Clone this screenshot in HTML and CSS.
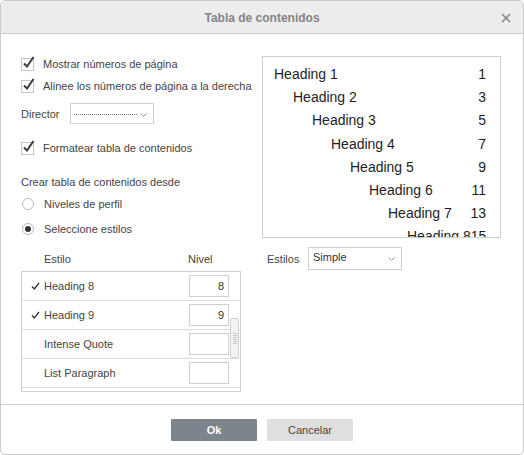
FILE: index.html
```html
<!DOCTYPE html>
<html>
<head>
<meta charset="utf-8">
<link rel="stylesheet" href="styles.css">
</head>
<body>
<div class="dialog">
  <div class="header">
    <span class="title">Tabla de contenidos</span>
    <svg class="close" width="10" height="10" viewBox="0 0 10 10"><path d="M1 1L9 9M9 1L1 9" stroke="#8a8a8a" stroke-width="1.6" fill="none"/></svg>
  </div>
  <div class="body">
    <div class="left">
      <div class="row">
        <span class="cb"><svg width="15" height="15" viewBox="0 0 15 15"><path d="M3 7.5L6 10.5L12.5 1" stroke="#3a3a3a" stroke-width="2" fill="none"/></svg></span>
        <span>Mostrar números de página</span>
      </div>
      <div class="row">
        <span class="cb"><svg width="15" height="15" viewBox="0 0 15 15"><path d="M3 7.5L6 10.5L12.5 1" stroke="#3a3a3a" stroke-width="2" fill="none"/></svg></span>
        <span>Alinee los números de página a la derecha</span>
      </div>
      <div class="row director">
        <span class="dlabel">Director</span>
        <div class="combo small">
          <span class="dots"></span>
          <svg class="chev" width="7" height="4" viewBox="0 0 7 4"><path d="M0.5 0.5L3.5 3.5L6.5 0.5" stroke="#9a9a9a" stroke-width="1" fill="none"/></svg>
        </div>
      </div>
      <div class="row fmt">
        <span class="cb"><svg width="15" height="15" viewBox="0 0 15 15"><path d="M3 7.5L6 10.5L12.5 1" stroke="#3a3a3a" stroke-width="2" fill="none"/></svg></span>
        <span>Formatear tabla de contenidos</span>
      </div>
      <div class="row crear">Crear tabla de contenidos desde</div>
      <div class="row">
        <span class="radio"></span>
        <span>Niveles de perfil</span>
      </div>
      <div class="row r2">
        <span class="radio on"></span>
        <span>Seleccione estilos</span>
      </div>
      <div class="row thead">
        <span class="th-estilo">Estilo</span>
        <span class="th-nivel">Nivel</span>
      </div>
      <div class="table">
        <div class="trow">
          <span class="tcheck"><svg width="9" height="8" viewBox="0 0 9 8"><path d="M1 4.5L3.3 7L8 1" stroke="#333" stroke-width="1.3" fill="none"/></svg></span>
          <span class="tname">Heading 8</span>
          <span class="lvl">8</span>
        </div>
        <div class="trow">
          <span class="tcheck"><svg width="9" height="8" viewBox="0 0 9 8"><path d="M1 4.5L3.3 7L8 1" stroke="#333" stroke-width="1.3" fill="none"/></svg></span>
          <span class="tname">Heading 9</span>
          <span class="lvl">9</span>
        </div>
        <div class="trow">
          <span class="tcheck"></span>
          <span class="tname">Intense Quote</span>
          <span class="lvl"></span>
        </div>
        <div class="trow">
          <span class="tcheck"></span>
          <span class="tname">List Paragraph</span>
          <span class="lvl"></span>
        </div>
        <div class="thumb"><span></span><span></span><span></span><span></span><span></span><span></span></div>
      </div>
    </div>
    <div class="right">
      <div class="preview">
        <div class="pl" style="padding-left:0px"><span>Heading 1</span><span>1</span></div>
        <div class="pl" style="padding-left:19px"><span>Heading 2</span><span>3</span></div>
        <div class="pl" style="padding-left:38px"><span>Heading 3</span><span>5</span></div>
        <div class="pl" style="padding-left:57px"><span>Heading 4</span><span>7</span></div>
        <div class="pl" style="padding-left:76px"><span>Heading 5</span><span>9</span></div>
        <div class="pl" style="padding-left:95px"><span>Heading 6</span><span>11</span></div>
        <div class="pl" style="padding-left:114px"><span>Heading 7</span><span>13</span></div>
        <div class="pl" style="padding-left:133px"><span>Heading 8</span><span>15</span></div>
      </div>
      <div class="estilos">
        <span class="elabel">Estilos</span>
        <div class="combo big">
          <span class="ctext">Simple</span>
          <svg class="chev" width="7" height="4" viewBox="0 0 7 4"><path d="M0.5 0.5L3.5 3.5L6.5 0.5" stroke="#9a9a9a" stroke-width="1" fill="none"/></svg>
        </div>
      </div>
    </div>
  </div>
  <div class="footer">
    <button class="btn ok">Ok</button>
    <button class="btn cancel">Cancelar</button>
  </div>
</div>
</body>
</html>
```

FILE: styles.css
```css
* { box-sizing: border-box; }
html, body { margin: 0; padding: 0; background: #fff; }
body {
  font-family: "Liberation Sans", Arial, sans-serif;
  font-size: 11px;
  color: #444;
}
.dialog {
  width: 524px;
  height: 455px;
  border: 1px solid #cbcbcb;
  border-radius: 5px;
  display: flex;
  flex-direction: column;
  overflow: hidden;
  background: #fff;
}
.header {
  height: 33px;
  flex: none;
  background: #ededed;
  border-bottom: 1px solid #cbcbcb;
  position: relative;
  display: flex;
  align-items: center;
  justify-content: center;
}
.title {
  font-size: 12px;
  font-weight: bold;
  color: #848484;
  margin-top: 2px;
}
.close {
  position: absolute;
  right: 12px;
  top: 12px;
}
.body {
  flex: 1;
  display: flex;
  padding-left: 20px;
}
.left {
  width: 219px;
  padding-top: 19px;
  display: flex;
  flex-direction: column;
}
.row {
  height: 22px;
  display: flex;
  align-items: center;
  white-space: nowrap;
}
.cb {
  width: 13px;
  height: 13px;
  border: 1px solid #c6c6c6;
  position: relative;
  margin-right: 9px;
  flex: none;
}
.cb svg {
  position: absolute;
  left: -1px;
  top: -3px;
}
.director {
  height: 21px;
  margin-top: 6px;
}
.dlabel { width: 49px; }
.combo {
  border: 1px solid #cfcfcf;
  display: flex;
  align-items: center;
  position: relative;
  background: #fff;
}
.combo.small { width: 84px; height: 21px; }
.combo.big { width: 94px; height: 23px; }
.dots {
  margin-left: 3px;
  width: 63px;
  border-bottom: 1px dotted #777;
  margin-top: 2px;
}
.chev {
  position: absolute;
  right: 6px;
  top: 9px;
}
.fmt { margin-top: 13px; }
.crear { margin-top: 12px; }
.radio {
  width: 12px;
  height: 12px;
  border: 1px solid #b8b8b8;
  border-radius: 50%;
  margin-right: 10px;
  margin-left: 1px;
  position: relative;
  flex: none;
}
.radio.on::after {
  content: "";
  position: absolute;
  left: 2px;
  top: 2px;
  width: 6px;
  height: 6px;
  border-radius: 50%;
  background: #333;
}
.r2 { margin-top: 3px; }
.thead { margin-top: 8px; }
.th-estilo { margin-left: 23px; width: 144px; }
.table {
  margin-top: 1px;
  width: 220px;
  height: 121px;
  border: 1px solid #cfcfcf;
  position: relative;
  overflow: hidden;
}
.trow {
  height: 29px;
  border-bottom: 1px solid #dcdcdc;
  display: flex;
  align-items: center;
}
.tcheck {
  width: 22px;
  padding-left: 9px;
  flex: none;
  display: flex;
  align-items: center;
}
.tname { flex: 1; }
.lvl {
  width: 40px;
  height: 22px;
  border: 1px solid #cfcfcf;
  margin-right: 11px;
  text-align: right;
  padding-right: 4px;
  line-height: 20px;
  color: #333;
  background: #fff;
}
.thumb {
  position: absolute;
  left: 208px;
  top: 46px;
  width: 9px;
  height: 40px;
  border: 1px solid #cfcfcf;
  border-radius: 2px;
  background: #f3f3f3;
  display: flex;
  flex-direction: column;
  align-items: center;
  justify-content: center;
  gap: 1px;
}
.thumb span {
  width: 4px;
  height: 1px;
  background: #c8c8c8;
}
.right {
  margin-left: 22px;
  padding-top: 22px;
  width: 239px;
  display: flex;
  flex-direction: column;
}
.preview {
  width: 239px;
  height: 182px;
  border: 1px solid #cfcfcf;
  overflow: hidden;
  padding: 6px 14px 0 11px;
  font-size: 14px;
  color: #1e1e1e;
}
.pl {
  height: 23.2px;
  line-height: 23px;
  display: flex;
  justify-content: space-between;
  white-space: nowrap;
}
.estilos {
  margin-top: 9px;
  display: flex;
  align-items: center;
}
.elabel { margin-left: 5px; width: 41px; }
.ctext { margin-left: 4px; margin-top: -3px; color: #333; }
.footer {
  height: 50px;
  flex: none;
  border-top: 1px solid #cbcbcb;
  display: flex;
  justify-content: center;
  gap: 10px;
  padding-top: 14px;
}
.btn {
  width: 86px;
  height: 22px;
  border: none;
  border-radius: 1px;
  font-family: "Liberation Sans", Arial, sans-serif;
  font-size: 11px;
  padding: 0;
}
.ok {
  background: #7d858c;
  color: #fff;
  font-weight: bold;
}
.cancel {
  background: #dfdfdf;
  color: #444;
}
```
